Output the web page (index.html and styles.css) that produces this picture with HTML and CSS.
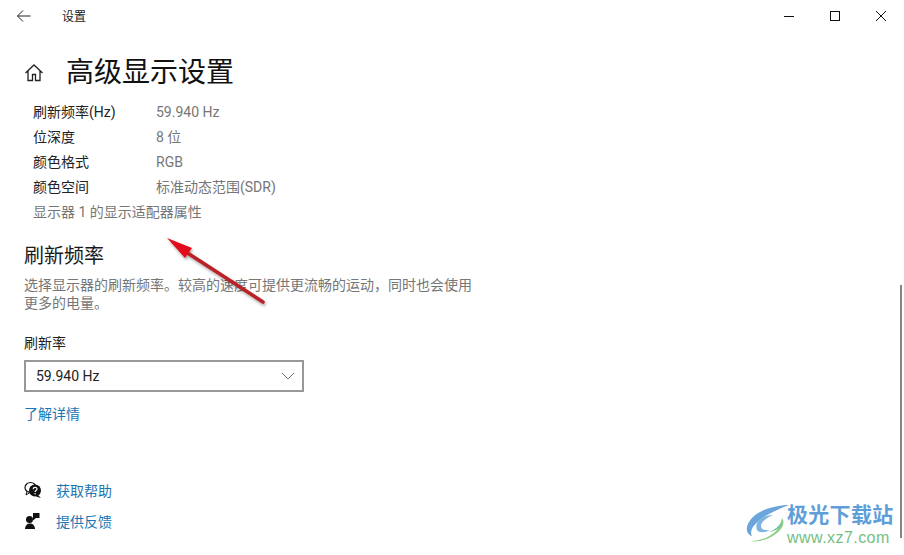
FILE: index.html
```html
<!DOCTYPE html>
<html lang="zh-CN">
<head>
<meta charset="utf-8">
<title>设置</title>
<link rel="stylesheet" href="styles.css">
</head>
<body>
<div class="window">
  <header class="titlebar">
    <svg class="back" width="16" height="16" viewBox="0 0 16 16"><path d="M7 2.500 1.500 8 7 13.500M1.500 8H14.500" fill="none" stroke="#222" stroke-width="1"/></svg>
    <span class="app-name">设置</span>
    <div class="controls">
      <svg width="12" height="12" viewBox="0 0 12 12"><path d="M0 6.500H10" stroke="#111" stroke-width="1"/></svg>
      <svg width="12" height="12" viewBox="0 0 12 12"><rect x=".5" y="1.500" width="9" height="9" fill="none" stroke="#111" stroke-width="1"/></svg>
      <svg width="12" height="12" viewBox="0 0 12 12"><path d="M0 1 10 11M10 1 0 11" stroke="#111" stroke-width="1"/></svg>
    </div>
  </header>
  <main class="content">
    <div class="page-head">
      <svg class="home" width="20" height="20" viewBox="0 0 20 20"><path d="M1.500 10 10 2l8.500 8M4 8v9.500h4.500V11.500h3v6H16V8" fill="none" stroke="#222" stroke-width="1.300"/></svg>
      <h1>高级显示设置</h1>
    </div>
    <dl class="info">
      <div class="info-row"><dt>刷新频率(Hz)</dt><dd>59.940 Hz</dd></div>
      <div class="info-row"><dt>位深度</dt><dd>8 位</dd></div>
      <div class="info-row"><dt>颜色格式</dt><dd>RGB</dd></div>
      <div class="info-row"><dt>颜色空间</dt><dd>标准动态范围(SDR)</dd></div>
      <div class="info-row adapter">显示器 1 的显示适配器属性</div>
    </dl>
    <h2>刷新频率</h2>
    <p class="desc">选择显示器的刷新频率。较高的速度可提供更流畅的运动，同时也会使用更多的电量。</p>
    <div class="field-label">刷新率</div>
    <div class="select">
      <span>59.940 Hz</span>
      <svg width="14" height="8" viewBox="0 0 14 8"><path d="M1 1 7 7 13 1" fill="none" stroke="#777" stroke-width="1"/></svg>
    </div>
    <a class="link learn">了解详情</a>
    <div class="help">
      <div class="help-row">
        <svg width="18" height="18" viewBox="0 0 18 18">
          <ellipse cx="6.500" cy="6.500" rx="5.500" ry="5" fill="#fff" stroke="#111" stroke-width="1.200"/>
          <path d="M3 10.500 2 14l4-2.500z" fill="#fff" stroke="#111"/>
          <circle cx="11" cy="9.500" r="6" fill="#111"/>
          <path d="M14 14l3 3-5-1.500z" fill="#111"/>
          <path d="M9.200 8.200c0-2.400 3.800-2.400 3.800-.1 0 1.400-1.900 1.400-1.900 2.900" fill="none" stroke="#fff" stroke-width="1.200"/>
          <circle cx="11.100" cy="12.700" r=".8" fill="#fff"/>
        </svg>
        <a class="link">获取帮助</a>
      </div>
      <div class="help-row">
        <svg width="18" height="18" viewBox="0 0 18 18">
          <circle cx="5.500" cy="7.500" r="3.500" fill="#111"/>
          <path d="M1 17c0-7.500 10-7.500 10 0z" fill="#111"/>
          <path d="M9 1h6.500v5H12L9 8.500z" fill="#111"/>
        </svg>
        <a class="link">提供反馈</a>
      </div>
    </div>
  </main>
  <div class="scrollbar"></div>
  <svg class="arrow" width="130" height="90" viewBox="0 0 130 90">
    <defs><filter id="sh" x="-20%" y="-20%" width="140%" height="140%"><feDropShadow dx="1" dy="2" stdDeviation="1.500" flood-color="#000" flood-opacity=".35"/></filter></defs>
    <g filter="url(#sh)">
      <path d="M113 77 36 27" stroke="#b92025" stroke-width="3.600" stroke-linecap="round" fill="none"/>
      <path d="M17 13 42 23 35 33z" fill="#e2101a"/>
    </g>
  </svg>
  <div class="watermark">
    <svg class="wm-logo" width="48" height="42" viewBox="0 0 48 42">
      <path d="M44 2C30 2 6 8 2 24c-1 5 2 8 5 9C3 26 12 14 44 2z" fill="#6aa5dc"/>
      <path d="M28 12C16 12 9 20 12 27c2 3 8 3 13 0-6 1-9-1-9-4 0-4 5-8 12-11z" fill="#7fb4e2"/>
      <path d="M37 15c4 5 0 14-13 20-7 3-13 4-19 3 12 0 30-6 32-23z" fill="#8ccf85"/>
      <path d="M36 15c2 5-4 11-12 14 8-1 15-6 12-14z" fill="#69bf9c"/>
    </svg>
    <div class="wm-text">
      <span class="wm-name">极光下载站</span>
      <span class="wm-url">www.xz7.com</span>
    </div>
  </div>
</div>
</body>
</html>
```
FILE: styles.css
```css
* { box-sizing: border-box; }
html, body { margin: 0; height: 100%; overflow: hidden; background: #fff; }
body {
  font-family: Roboto, "Noto Sans CJK SC", sans-serif;
  color: #1a1a1a;
  font-size: 14px;
}
.window { position: relative; width: 904px; height: 555px; overflow: hidden; }

.titlebar { display: flex; align-items: center; height: 32px; padding-left: 16px; }
.back { flex: none; }
.app-name { margin: 2px 0 0 30px; font-size: 12px; line-height: 18px; color: #222; }
.controls { margin-left: auto; display: flex; gap: 34px; padding-right: 16px; }
.controls svg { display: block; }

.content { padding: 0 0 0 24px; }
.page-head { display: flex; align-items: center; height: 40px; margin-top: 21px; }
.home { flex: none; }
h1 { margin: 0 0 0 22px; font-size: 28px; font-weight: 400; line-height: 40px; color: #111; }

.info { margin: 7px 0 0 9px; }
.info-row { display: flex; height: 25px; line-height: 25px; }
.info dt { width: 123px; color: #222; }
.info dd { margin: 0; color: #767676; }
.adapter { color: #767676; }

h2 { margin: 17px 0 0; font-size: 20px; font-weight: 400; line-height: 28px; color: #1a1a1a; }
.desc { margin: 6px 0 0; width: 450px; line-height: 18px; color: #767676; }
.field-label { margin-top: 21px; line-height: 20px; color: #222; }
.select {
  display: flex; align-items: center; justify-content: space-between;
  width: 280px; height: 32px; margin-top: 7px; padding: 0 7px 0 10px;
  border: 2px solid #999; color: #222;
}
.link { color: #1a76b4; }
.learn { display: block; margin-top: 12px; line-height: 20px; }
.help { margin-top: 56px; display: flex; flex-direction: column; gap: 11px; }
.help-row { display: flex; align-items: center; gap: 14px; height: 20px; }
.help-row svg { flex: none; }

.scrollbar { position: absolute; right: 2px; top: 285px; width: 2px; height: 253px; background: #858585; }
.arrow { position: absolute; left: 150px; top: 225px; }
.watermark { position: absolute; left: 745px; top: 503px; display: flex; }
.wm-logo { flex: none; }
.wm-text { margin-left: -6px; display: flex; flex-direction: column; }
.wm-name { font-size: 21px; font-weight: 700; line-height: 25px; letter-spacing: .3px; color: #5f9fd8; white-space: nowrap; }
.wm-url { font-family: "Liberation Sans", sans-serif; font-size: 16px; line-height: 20px; letter-spacing: .45px; color: #74c17f; white-space: nowrap; }
```
